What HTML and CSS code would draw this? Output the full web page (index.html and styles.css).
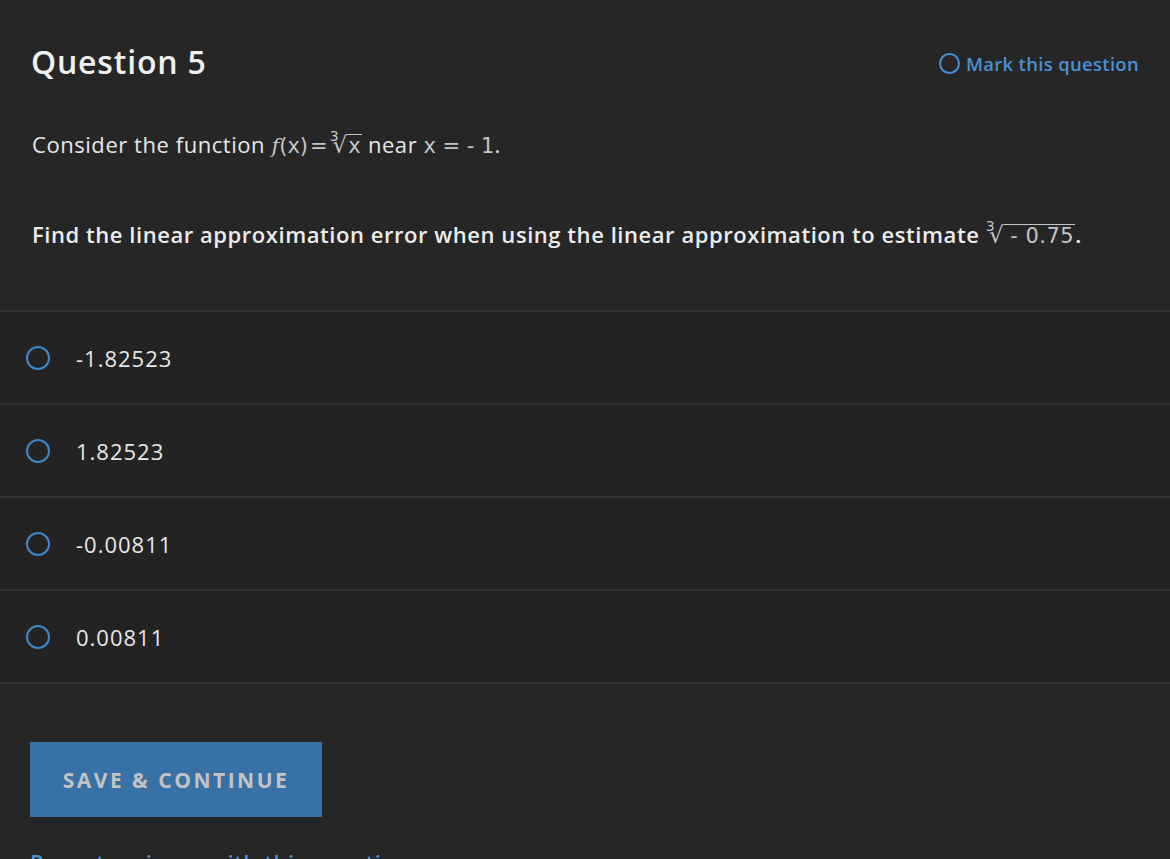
FILE: index.html
```html
<!DOCTYPE html>
<html>
<head>
<meta charset="utf-8">
<link rel="stylesheet" href="styles.css">
</head>
<body>
<div class="page">
  <header class="head">
    <h1 class="title">Question 5</h1>
    <a class="mark"><span class="mark-circle"></span>Mark this question</a>
  </header>
  <p class="prompt">Consider the function <span class="math"><span class="it">f</span>(x)<span class="eq">=</span><span class="rad"><span class="idx">3</span><span class="sym">√</span><span class="under">x</span></span></span> near <span class="math">x = - 1</span>.</p>
  <p class="task">Find the linear approximation error when using the linear approximation to estimate <span class="math thin"><span class="rad"><span class="idx">3</span><span class="sym">√</span><span class="under wide">- 0.75</span></span></span>.</p>
  <ul class="options">
    <li class="opt"><span class="radio"></span><span class="val">-1.82523</span></li>
    <li class="opt"><span class="radio"></span><span class="val">1.82523</span></li>
    <li class="opt"><span class="radio"></span><span class="val">-0.00811</span></li>
    <li class="opt"><span class="radio"></span><span class="val">0.00811</span></li>
  </ul>
  <div class="actions">
    <button class="save">SAVE &amp; CONTINUE</button>
    <a class="report">Report an issue with this question</a>
  </div>
</div>
</body>
</html>
```

FILE: styles.css
```css
html, body {
  margin: 0;
  padding: 0;
  background: #262626;
  overflow: hidden;
}
body {
  font-family: "Open Sans", Lato, sans-serif;
  color: #e6e6e6;
  width: 1170px;
  height: 859px;
}
.page {
  padding-top: 40px;
}
.head {
  display: flex;
  justify-content: space-between;
  align-items: center;
  padding: 0 31px 0 31px;
}
.title {
  margin: 0;
  font-size: 32px;
  font-weight: 600;
  letter-spacing: 0.8px;
  color: #f0f0f0;
  line-height: 44px;
}
.mark {
  display: flex;
  align-items: center;
  gap: 6px;
  color: #4a90d4;
  font-size: 18.5px;
  font-weight: 600;
  letter-spacing: 0.3px;
  margin-top: 2px;
}
.mark-circle {
  width: 17px;
  height: 17px;
  border: 2px solid #4a90d4;
  border-radius: 50%;
  box-sizing: content-box;
}
.prompt {
  margin: 45px 0 0 32px;
  height: 30px;
  font-size: 22px;
  letter-spacing: 0.55px;
  line-height: 30px;
  color: #e8e8e8;
}
.task {
  margin: 60px 0 0 32px;
  height: 30px;
  font-size: 22px;
  letter-spacing: 0.55px;
  line-height: 30px;
  font-weight: 600;
  color: #ececec;
}
.math {
  font-family: "DejaVu Sans", sans-serif;
  font-weight: 400;
  color: #c4c4c4;
  font-size: 21px;
  letter-spacing: 0;
  line-height: 1;
}
.it {
  font-family: "DejaVu Serif", serif;
  font-style: italic;
}
.eq {
  margin: 0 2px;
}
.rad {
  display: inline-block;
  white-space: nowrap;
  line-height: 1;
}
.idx {
  font-size: 14px;
  vertical-align: 12px;
  margin-right: -6px;
}
.sym {
  font-size: 23px;
  line-height: 1;
}
.under {
  display: inline-block;
  border-top: 1.5px solid #c4c4c4;
  line-height: 22px;
  padding: 0 1px;
}
.under.wide {
  padding-left: 6px;
}
.thin {
  letter-spacing: 0.5px;
}
.options {
  list-style: none;
  margin: 61px 0 0 0;
  padding: 0;
  border-bottom: 2px solid #333333;
}
.opt {
  display: flex;
  align-items: center;
  height: 91px;
  border-top: 2px solid #333333;
  padding-left: 26px;
  background: #232323;
}
.radio {
  width: 20px;
  height: 20px;
  border: 2.5px solid #3e87cb;
  border-radius: 50%;
  box-sizing: content-box;
  margin-right: 26px;
}
.val {
  font-size: 22px;
  letter-spacing: 1px;
  color: #e8e8e8;
}
.actions {
  padding: 58px 0 0 30px;
}
.save {
  display: block;
  width: 292px;
  height: 75px;
  background: #3871a6;
  border: none;
  color: #c3c3c3;
  font-family: "Open Sans", sans-serif;
  font-weight: 700;
  font-size: 21px;
  letter-spacing: 2.5px;
  padding: 0;
}
.report {
  display: block;
  margin-top: 30px;
  color: #4a90d4;
  font-size: 22px;
  letter-spacing: 0.55px;
  font-weight: 600;
}
```
